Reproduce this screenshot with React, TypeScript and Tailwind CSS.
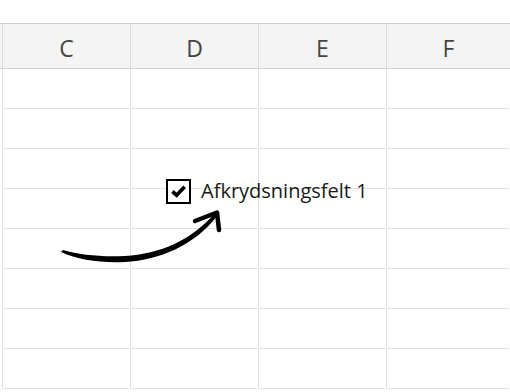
import React from 'react';

const columns = ['C', 'D', 'E', 'F'];
const rows = Array.from({ length: 8 }, (_, i) => i);

const Cell: React.FC<{ last?: boolean }> = ({ last }) => (
  <div className={`h-10 ${last ? '' : 'border-r border-[#e1e1e1]'}`}>
    <div className="h-full mx-px border-b border-[#e1e1e1]"></div>
  </div>
);

const App: React.FC = () => {
  return (
    <div className="relative w-[510px] h-[392px] overflow-hidden bg-white" style={{ fontFamily: '"Open Sans", "Noto Sans", sans-serif' }}>
      <div className="h-[23px]"></div>
      {/* column header */}
      <div className="grid grid-cols-[3px_128px_128px_128px_1fr] h-[46px] bg-[#f4f4f4] border-t border-b border-[#d2d2d2]">
        <div className="border-r border-[#dadada]"></div>
        {columns.map((c, i) => (
          <div
            key={c}
            className={`flex items-center justify-center pt-[4px] text-[23px] font-normal text-[#444444] ${i < 3 ? 'border-r border-[#dadada]' : ''}`}
          >
            {c}
          </div>
        ))}
      </div>
      {/* sheet body */}
      <div className="grid grid-cols-[3px_128px_128px_128px_1fr]">
        {rows.map((r) => (
          <React.Fragment key={r}>
            <div className="h-10 border-r border-[#e1e1e1]"></div>
            <Cell />
            <Cell />
            <Cell />
            <Cell last />
          </React.Fragment>
        ))}
      </div>

      {/* form control checkbox */}
      <div className="absolute left-[166px] top-[179px] flex items-center gap-[10px]">
        <div className="w-[25px] h-[25px] border-2 border-black bg-white flex items-center justify-center">
          <svg viewBox="0 0 16 16" className="w-[15px] h-[15px]">
            <path d="M1.5 8 L6 12 L14.5 3" fill="none" stroke="#000" strokeWidth="4" strokeLinecap="butt" strokeLinejoin="miter" />
          </svg>
        </div>
        <span className="text-[20px] text-[#1a1a1a] leading-none pb-[1px]">Afkrydsningsfelt 1</span>
      </div>

      {/* hand-drawn arrow */}
      <svg className="absolute left-0 top-0" width="510" height="392" viewBox="0 0 510 392">
        <path
          d="M61 252 C 78 260, 100 263, 125 262 C 160 260, 195 245, 217 216 L 215 213 C 192 240, 160 254, 125 256 C 100 257, 80 255, 63 250 Z"
          fill="#000"
        />
        <path d="M195 221 L217 212.5 L219 230" fill="none" stroke="#000" strokeWidth="4.5" strokeLinecap="round" strokeLinejoin="round" />
      </svg>
    </div>
  );
};

export default App;
